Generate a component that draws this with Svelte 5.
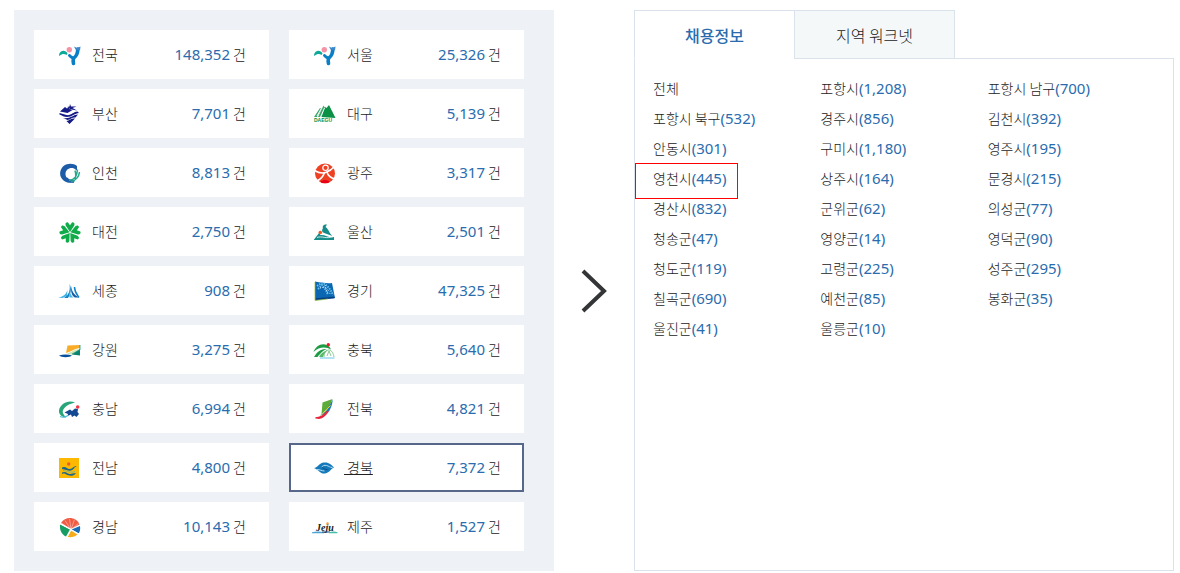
<script>
let regions = [
    { name: '전국', logo: 'seoul', count: 148352 },
    { name: '서울', logo: 'seoul', count: 25326 },
    { name: '부산', logo: 'busan', count: 7701 },
    { name: '대구', logo: 'daegu', count: 5139 },
    { name: '인천', logo: 'incheon', count: 8813 },
    { name: '광주', logo: 'gwangju', count: 3317 },
    { name: '대전', logo: 'daejeon', count: 2750 },
    { name: '울산', logo: 'ulsan', count: 2501 },
    { name: '세종', logo: 'sejong', count: 908 },
    { name: '경기', logo: 'gyeonggi', count: 47325 },
    { name: '강원', logo: 'gangwon', count: 3275 },
    { name: '충북', logo: 'chungbuk', count: 5640 },
    { name: '충남', logo: 'chungnam', count: 6994 },
    { name: '전북', logo: 'jeonbuk', count: 4821 },
    { name: '전남', logo: 'jeonnam', count: 4800 },
    { name: '경북', logo: 'gyeongbuk', count: 7372 },
    { name: '경남', logo: 'gyeongnam', count: 10143 },
    { name: '제주', logo: 'jeju', count: 1527 }
];

let cities = [
    { name: '전체' },
    { name: '포항시', count: 1208 },
    { name: '포항시 남구', count: 700 },
    { name: '포항시 북구', count: 532 },
    { name: '경주시', count: 856 },
    { name: '김천시', count: 392 },
    { name: '안동시', count: 301 },
    { name: '구미시', count: 1180 },
    { name: '영주시', count: 195 },
    { name: '영천시', count: 445 },
    { name: '상주시', count: 164 },
    { name: '문경시', count: 215 },
    { name: '경산시', count: 832 },
    { name: '군위군', count: 62 },
    { name: '의성군', count: 77 },
    { name: '청송군', count: 47 },
    { name: '영양군', count: 14 },
    { name: '영덕군', count: 90 },
    { name: '청도군', count: 119 },
    { name: '고령군', count: 225 },
    { name: '성주군', count: 295 },
    { name: '칠곡군', count: 690 },
    { name: '예천군', count: 85 },
    { name: '봉화군', count: 35 },
    { name: '울진군', count: 41 },
    { name: '울릉군', count: 10 }
];

let tabs = ['채용정보', '지역 워크넷'];

let selectedRegion = $state('경북');
let selectedCity = $state('영천시');
let activeTab = $state(0);

let format = (n) => n.toLocaleString('en-US');

function pickRegion(e, name) {
    e.preventDefault();
    selectedRegion = name;
}

function pickCity(e, name) {
    e.preventDefault();
    selectedCity = name;
}
</script>

{#snippet logo(id)}
    <svg class="logo" viewBox="0 0 30 24" width="30" height="24" fill="none" aria-hidden="true">
        {#if id === 'seoul'}
            <path d="M2 12C3 7 8.500 6.500 10.500 10.500L9.500 12C7.500 10.500 5 10.500 2.500 13Z" fill="#0aa99a" />
            <circle cx="12.300" cy="6.700" r="2.700" fill="#f593a5" />
            <path d="M12.500 12.500c1 1.500 2 2 3.500 2.500" stroke="#0b7fc6" stroke-width="3" stroke-linecap="round" />
            <path d="M16.500 20.500c-.5-2-.5-3.500 0-5 3.500-3 4.500-5.500 4.200-9.500" stroke="#0b7fc6" stroke-width="3.600" stroke-linecap="round" />
            <path d="M17 3.500l3 1.500 3.500-1.500-.5 4-4.500-1z" fill="#3c87cb" />
        {:else if id === 'busan'}
            <path d="M3 9.500L8 5l2 1.500 2-1.500 1 3h2.500l-5 3z" fill="#141a86" />
            <path d="M13 2l1 2.500 5.500 0-4 1.500 4.500 2.500-5.500-1-2 .5 0-2-2.500-1 2.500-.5z" fill="#141a86" />
            <path d="M2.500 11l7 2c4.500 1 7-3.500 11-3.500L22 11c-4 0-7 4-12 4-3 0-5-1.500-7.500-2.500z" fill="#141a86" />
            <path d="M6 16c7 1.500 10-3.500 15-3.500l-2.500 3c-3-.5-5 2-8 2.500z" fill="#141a86" />
            <path d="M9.500 19c3-.5 5-3 8.500-2.500l-5.500 5.500z" fill="#141a86" />
        {:else if id === 'daegu'}
            <path d="M2 15L8 6l1.500 1L5 15zM6 15L11.500 3.500 13 6 9 15z" fill="#3ba66b" />
            <path d="M9.500 15L13 5l1.500 1L17 3l3 6 3.500 7z" fill="#0a9145" />
            <path d="M5 14l4-7M8.500 15l4-9" stroke="#fff" stroke-width="1" />
            <text x="2" y="20" fill="#0a9145" font-size="5" font-weight="700">DAEGU</text>
        {:else if id === 'incheon'}
            <path d="M20 5C16.500 2 9 2 5.500 6C2 10.500 2.500 16 6.500 19.500C10 22.500 16 22.300 18 20.500C12 20 8.500 17 8.500 13C8.500 8.500 13 6 17 7.500L20 9.500Z" fill="#1e5ca8" />
            <path d="M9 17c2 2.500 4 3.500 8 3.500" stroke="#1e5ca8" stroke-width="2.500" />
            <path d="M12 19.500c6-1 8-4 8.500-11M14 21c5.500-2 8-5 8.500-10M18 18c1-2 1-5 0-8.500" stroke="#27a98c" stroke-width="1.500" />
        {:else if id === 'gwangju'}
            <circle cx="13" cy="12.500" r="10" fill="#ee4123" />
            <circle cx="13.500" cy="6.800" r="2.700" fill="#ee4123" stroke="#fff" stroke-width="1.200" />
            <path d="M2.500 9.500c4 2.500 8 3 11 2s6-2.500 9.500-6.500" stroke="#fff" stroke-width="1.600" />
            <path d="M12.500 11.500C11 16 9 18.500 4.500 20M15 11c1 4 4 6 8 7" stroke="#fff" stroke-width="1.600" />
            <path d="M8.500 20.500c2.500-2 6.500-2 9 0l-1.500 1.500h-6z" fill="#e80019" />
        {:else if id === 'daejeon'}
            {#each [0, 72, 144, 216, 288] as angle}
                <path d="M13 12L8.700 5.500C8 3 9 2.300 10.800 2.300L13 5.300L15.200 2.300C17 2.300 18 3 17.300 5.500Z" transform="rotate({angle} 13 12.500)" fill="#10ac4a" />
            {/each}
        {:else if id === 'ulsan'}
            <path d="M11 8c-1-2 1-4 4-3.500l-1.500 2.500c4 3 3 5.500 7 9l-7-2.500c-4-1-4-3-2.500-5.500z" fill="#168c88" />
            <path d="M2 19.500L9 10.500l-1 4.500c6-.500 9 3.500 14 2v3H2z" fill="#168c88" />
            <path d="M5 17.500c5-2 9 2 16-1" stroke="#fff" stroke-width="0.800" />
            <circle cx="8.300" cy="12.500" r="1.800" fill="#f15a24" />
        {:else if id === 'sejong'}
            <path d="M1 18.500c5-.5 8-3 9.500-7.500l-.5 6-4.500 2z" fill="#42b4e6" />
            <path d="M7 19c5-3 6.500-8 5.500-14 2.500 4.500 1.500 9-1.500 14z" fill="#1482c5" />
            <path d="M14.500 7c0 6 3 9 7.500 11.500h-4c-3.500-2-4.500-6-3.500-11.500z" fill="#175bab" />
            <path d="M13 12c0 3 1.500 5 3.500 6.500h-4c-.5-2-.5-4 .5-6.500z" fill="#48b7df" />
            <path d="M17.500 8c0 5 2 7 4.500 10.500" stroke="#1482c5" stroke-width="1.500" />
        {:else if id === 'gyeonggi'}
            <path d="M3 2.500C10 4 16 4.500 20 4l3 15-20 2.500z" fill="#0b67b2" />
            <path d="M4 20l18.500-1.500" stroke="#063d7e" stroke-width="1.500" />
            <path d="M5 7l5-3 3 1 4 4 2 3 2 4M6 10l4-4 4 5 2 5" stroke="#65bde9" stroke-width="2" stroke-dasharray="1.500 1" />
            <path d="M8 9l5-1 5 5M13 6l2 7 4 2" stroke="#d7effb" stroke-width="1" stroke-dasharray="1 1.500" />
            <path d="M3 3v18.500l13-1.500" stroke="#9bbc35" stroke-width="0.700" />
        {:else if id === 'gangwon'}
            <path d="M10.500 7.500L23 7v3.500c-4-1-6 2-10 3l-4 1.500z" fill="#f8ac28" />
            <path d="M9.500 15.500c5-.500 8-5 13.500-4V17l-10-.5z" fill="#cfe5b4" />
            <path d="M15 16.500L23 11v6.500z" fill="#078270" />
            <path d="M23 7v5l-8 4" stroke="#15947c" stroke-width="0.800" />
            <path d="M2 17.500c4-1.500 9-1.500 13 0-2 2-10 2.500-13 0z" fill="#064f9e" />
        {:else if id === 'chungbuk'}
            <path d="M1.500 14C4 7.500 10 4.500 15.500 7.500c2 1 3 2.500 3.500 4-5-3-12-3-17.500 2.500z" fill="#1d9c46" />
            <path d="M2 19C6 12 10 11 15 11c-4 1-7 5-9.500 8z" fill="#1d9c46" />
            <path d="M7 19c2-4 5-6 9-7-3 2-4.500 5-5 7z" fill="#59b96b" />
            <path d="M12 19c0-6 3-7 5-7 3 0 4.500 4 5 7M15 18l2-5 2 5" stroke="#6bbb78" stroke-width="0.800" />
            <path d="M8 20h14.500" stroke="#66c5ee" />
            <circle cx="16.300" cy="6.700" r="1.700" fill="#ed1b2b" />
        {:else if id === 'chungnam'}
            <path d="M18 5.500C11 2.500 3 7 2 13.500c-.500 4 3.500 7 7 7L7 18c-4-5 2-10.500 11-12.500z" fill="#28a579" />
            <path d="M7.500 15.500l5.500-3 2 1.500 3-2.500 3 .5-.5 3 1.500 2-2.500 3-2-1.500-2.500 1.500-1-2.500-3.500 1.500.5-2z" fill="#134992" />
            <path d="M3 19.500c3 1.500 5 1 8-1" stroke="#4abcdf" stroke-width="1.200" />
            <circle cx="20.700" cy="10" r="1.800" fill="#ee3742" />
        {:else if id === 'jeonbuk'}
            <path d="M10.500 5.500L20.500 2 18 8.500C16 13 12 15 9.500 17z" fill="#5eac38" />
            <path d="M20.800 2.500L15.500 12c-2 3-5 4-7.500 6.500l5-1c5-3 7-8 7.800-15z" fill="#137bbc" />
            <path d="M18.500 8.500L9 18.500" stroke="#f8d23a" stroke-width="1" />
            <path d="M3.500 20.500c6 0 11-3 15-9-3 6-7.500 10.500-12 10.500z" fill="#e6233b" />
            <path d="M3.500 21c5 0 9-3 12-6.500" stroke="#e6233b" stroke-width="1.500" />
        {:else if id === 'jeonnam'}
            <path d="M2 2h20v20H2z" fill="#fcb900" />
            <circle cx="11.700" cy="8" r="1.700" fill="#f15a24" />
            <path d="M5 11.500c4-2 5 2 8 1.500s4-4 6.500-2.500l-2 1c-1 3-5 4-8 2.500l-4.500-1zM5 16.500c4-2 5.500 2 8.500 1.500 2-.500 4-1 5.500-.5-3 3-6 2.500-8.500 1.500s-3-2-5.500-1z" fill="#17658c" />
            <path d="M6 14.500c4 0 7 3 12 1" stroke="#64b5a1" stroke-width="0.800" />
        {:else if id === 'gyeongbuk'}
            <path d="M2 12c4-.5 5-5 10-5.500 5-.5 7 2 10 5-3 1-4 5-9 6-5 .5-6-3.500-11-5.500z" fill="#1479ba" />
            <path d="M4.500 13.500c4 0 5 1.500 8 1.500M9.500 11.500c1-2 3-2.500 5-2 2.500.5 3 2 6 2" stroke="#b5dcf0" stroke-width="1" />
            <path d="M9.500 11.500c2 0 3 2.500 6 2" stroke="#0a4d88" />
        {:else if id === 'gyeongnam'}
            <path d="M4 8C6 4.500 9.500 3 13 3s8 2 9.500 6.500L14 14z" fill="#ef5c43" />
            <path d="M3 9.500l10 5-4 7C4.500 19.500 2.500 15 3 9.500z" fill="#169d63" />
            <path d="M23 11l-8.500 3.500 7 4c1.500-2 2-4.500 1.500-7.500z" fill="#176bb7" />
            <path d="M14 15.500l6.500 4C18.500 21.500 15 22.500 10.500 22z" fill="#f6ad1d" />
            <path d="M5 8.500l9 6 7.500-6M8 5.500l6 9 3.500-10M12.500 4l1.500 10" stroke="#fff" stroke-width="0.400" />
            <path d="M3 8.500l11 6-4 8M14 14.500l8 4.500" stroke="#fff" stroke-width="1" />
        {:else if id === 'jeju'}
            <text class="script" x="4" y="16" fill="#222" font-size="10">Jeju</text>
            <circle cx="15.500" cy="8.500" r="1.200" fill="#f39a3c" />
            <path d="M0 17.300c4-1 8-1 12 0v1H0z" fill="#4ba4d4" />
            <path d="M10 17h8" stroke="#17476e" />
            <path d="M17 17.300c3-1 6-1 8.500 0v1H17z" fill="#42bea9" />
        {/if}
    </svg>
{/snippet}

<main class="job-map">
    <section class="regions" aria-label="지역">
        {#each regions as region}
            <a
                class="region"
                class:selected={region.name === selectedRegion}
                href="#{region.name}"
                onclick={(e) => pickRegion(e, region.name)}
            >
                {@render logo(region.logo)}
                <span class="region-name">&nbsp;{region.name}</span>
                <span class="region-count"><span class="num">{format(region.count)}</span> 건</span>
            </a>
        {/each}
    </section>

    <div class="arrow">
        <svg width="26" height="44" viewBox="0 0 26 44" fill="none" aria-hidden="true">
            <path d="M2 2l21 20L2 42" stroke="#333536" stroke-width="4" />
        </svg>
    </div>

    <section class="detail">
        <div class="tabs" role="tablist">
            {#each tabs as tab, i}
                <button
                    class="tab"
                    class:active={i === activeTab}
                    role="tab"
                    aria-selected={i === activeTab}
                    onclick={() => (activeTab = i)}
                >{tab}</button>
            {/each}
        </div>
        <ul class="cities">
            {#each cities as city}
                <li class:marked={city.name === selectedCity}>
                    <a href="#{city.name}" onclick={(e) => pickCity(e, city.name)}
                        >{city.name}{#if city.count}<span class="num">({format(city.count)})</span>{/if}</a>
                </li>
            {/each}
        </ul>
    </section>
</main>

<style>
    :global(body) {
        margin: 0;
        background: #fff;
    }

    .job-map {
        display: grid;
        grid-template-columns: 1fr 80px 1fr;
        padding: 10px 6px 0 14px;
        color: #222;
        font-family: "Noto Sans CJK KR", sans-serif;
        font-size: 14px;
        font-weight: 300;
        line-height: 20px;
    }

    a {
        color: inherit;
        text-decoration: none;
    }

    .num {
        color: #2a6cae;
        font-family: "Noto Sans", sans-serif;
        font-size: 15px;
        font-weight: 400;
    }

    .regions {
        display: grid;
        grid-template-columns: 1fr 1fr;
        gap: 10px 20px;
        padding: 20px 30px 20px 20px;
        background: #eef2f6;
    }

    .region {
        display: flex;
        align-items: center;
        box-sizing: border-box;
        height: 49px;
        padding: 0 21px;
        border: 2px solid #fff;
        background: #fff;
    }

    .region.selected {
        border-color: #566789;
    }

    .region.selected .region-name {
        text-decoration: underline;
    }

    .region-name,
    .region-count {
        padding-bottom: 2px;
    }

    .logo {
        flex: none;
        margin-right: 2px;
        font-family: "Liberation Sans", sans-serif;
    }

    .script {
        font-family: "Liberation Serif", serif;
        font-style: italic;
        font-weight: 700;
    }

    .region-count {
        margin-left: auto;
    }

    .arrow {
        display: flex;
        align-items: center;
        justify-content: center;
    }

    .detail {
        display: flex;
        flex-direction: column;
    }

    .tabs {
        display: flex;
        position: relative;
        margin-bottom: -1px;
    }

    .tab {
        width: 161px;
        height: 49px;
        padding: 0;
        border: 1px solid #dae2eb;
        background: #f4f8f9;
        color: #222;
        font-family: inherit;
        font-size: 16px;
        font-weight: inherit;
        line-height: 24px;
        cursor: pointer;
    }

    .tab + .tab {
        margin-left: -1px;
    }

    .tab.active {
        border-bottom-color: #fff;
        background: #fff;
        color: #2a6cae;
        font-weight: 500;
    }

    .cities {
        flex: 1;
        display: grid;
        grid-template-columns: repeat(3, 1fr);
        grid-auto-rows: 30px;
        margin: 0;
        padding: 14px 18px;
        border: 1px solid #dae2eb;
        list-style: none;
    }

    .cities li {
        position: relative;
        justify-self: start;
        line-height: 30px;
        white-space: nowrap;
    }

    /* frame round the chosen city, out to the panel edge */
    .marked::after {
        content: "";
        position: absolute;
        inset: 0 -12px -6px -18px;
        border: 1px solid #f00;
        pointer-events: none;
    }
</style>
